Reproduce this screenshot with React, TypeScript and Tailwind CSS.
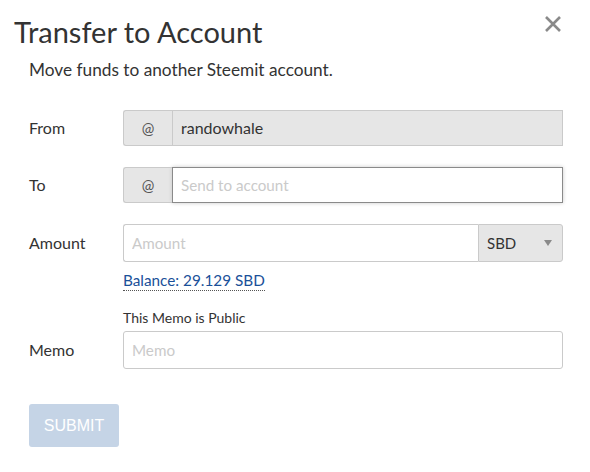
export default function App() {
  const labelCls = "w-[94px] shrink-0 text-[16px] text-[#333]";
  const boxCls = "border border-[#cacaca] text-[15.2px] outline-none";

  return (
    <div className="relative w-[590px] h-[472px] bg-white pl-[29px] pt-[14px] font-['Lato',sans-serif] text-[#333]">
      <h1 className="-ml-[15px] text-[29px] leading-[36px] font-normal text-[#333]">
        Transfer to Account
      </h1>
      <button className="absolute right-[28px] top-[15px] w-[18px] h-[18px]" aria-label="Close">
        <svg viewBox="0 0 18 18" className="w-[18px] h-[18px]">
          <path d="M2 2 L16 16 M16 2 L2 16" stroke="#8a8a8a" strokeWidth="2.6" strokeLinecap="butt" />
        </svg>
      </button>

      <p className="mt-[8px] text-[17.25px] leading-[24px]">Move funds to another Steemit account.</p>

      {/* From */}
      <div className="mt-[28px] flex items-center w-[534px]">
        <div className={labelCls}>From</div>
        <div className="flex flex-1 h-[36px]">
          <span className="w-[49px] flex items-center justify-center bg-[#e6e6e6] border border-[#cacaca] border-r-0 rounded-l-[3px] text-[15px] text-[#555]">
            @
          </span>
          <div className="flex-1 flex items-center px-[8px] bg-[#e6e6e6] border border-[#cacaca] text-[16px] text-[#333]">
            randowhale
          </div>
        </div>
      </div>

      {/* To */}
      <div className="mt-[21px] flex items-center w-[534px]">
        <div className={labelCls}>To</div>
        <div className="flex flex-1 h-[36px]">
          <span className="w-[49px] flex items-center justify-center bg-[#e6e6e6] border border-[#cacaca] border-r-0 rounded-l-[3px] text-[15px] text-[#555]">
            @
          </span>
          <input
            placeholder="Send to account"
            className="flex-1 min-w-0 px-[8px] bg-white border border-[#8a8a8a] text-[15.2px] outline-none shadow-[0_0_4px_#cacaca] placeholder:text-[#cacaca]"
          />
        </div>
      </div>

      {/* Amount */}
      <div className="mt-[21px] flex items-center w-[534px]">
        <div className={labelCls}>Amount</div>
        <div className="flex flex-1 h-[38px]">
          <input
            placeholder="Amount"
            className={`flex-1 min-w-0 px-[8px] bg-white rounded-l-[3px] border-r-0 ${boxCls} placeholder:text-[#cacaca]`}
          />
          <div className="w-[85px] flex items-center justify-between pl-[8px] pr-[10px] bg-[#e6e6e6] border border-[#cacaca] rounded-r-[3px] text-[15px] text-[#333]">
            <span>SBD</span>
            <svg viewBox="0 0 8 6" className="w-[8px] h-[6px]">
              <path d="M0 0 L8 0 L4 6 Z" fill="#8a8a8a" />
            </svg>
          </div>
        </div>
      </div>

      <div className="pl-[94px] mt-[8px] flex">
        <span className="text-[15.3px] leading-[20px] text-[#1a5099] border-b border-dotted border-[#555]">
          Balance: 29.129 SBD
        </span>
      </div>

      {/* Memo */}
      <div className="mt-[19px] flex items-end w-[534px]">
        <div className={`${labelCls} h-[38px] flex items-center`}>Memo</div>
        <div className="flex-1 flex flex-col">
          <div className="text-[14px] leading-[16px] mb-[5px] text-[#333]">This Memo is Public</div>
          <input
            placeholder="Memo"
            className={`h-[38px] px-[8px] bg-white rounded-[3px] ${boxCls} placeholder:text-[#cacaca]`}
          />
        </div>
      </div>

      <button className="mt-[35px] w-[90px] h-[43px] rounded-[3px] bg-[#c5d4e6] text-white text-[16px] font-['Liberation_Sans',Arial,sans-serif]">
        SUBMIT
      </button>
    </div>
  );
}
